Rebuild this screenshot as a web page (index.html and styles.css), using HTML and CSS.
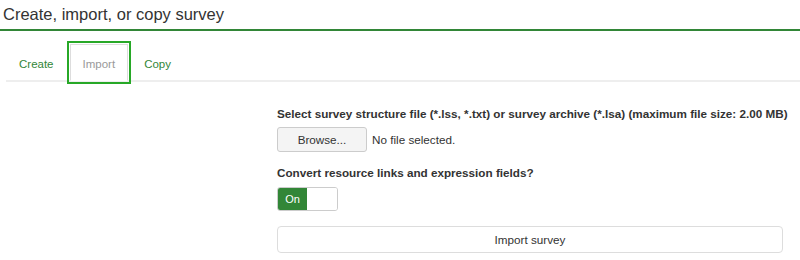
FILE: index.html
```html
<!DOCTYPE html>
<html>
<head>
<meta charset="utf-8">
<link rel="stylesheet" href="styles.css">
</head>
<body>
<div class="header">
  <h1 class="title">Create, import, or copy survey</h1>
</div>
<ul class="tabs">
  <li class="tab"><a class="tab-link">Create</a></li>
  <li class="tab active"><a class="tab-link">Import</a></li>
  <li class="tab"><a class="tab-link">Copy</a></li>
</ul>
<div class="form-grid">
  <div class="spacer"></div>
  <div class="form-col">
    <div class="label">Select survey structure file (*.lss, *.txt) or survey archive (*.lsa) (maximum file size: 2.00 MB)</div>
    <div class="file-row">
      <span class="browse">Browse...</span>
      <span class="file-name">No file selected.</span>
    </div>
    <div class="label label-2">Convert resource links and expression fields?</div>
    <div class="toggle">
      <span class="toggle-on">On</span>
      <span class="toggle-off"></span>
    </div>
    <div class="submit">Import survey</div>
  </div>
</div>
</body>
</html>
```
FILE: styles.css
```css
* { box-sizing: border-box; }
body {
  margin: 0;
  background: #fff;
  font-family: "Liberation Sans", Arial, sans-serif;
  color: #333;
  width: 800px;
  height: 260px;
  overflow: hidden;
}
.header {
  padding: 4px 0 5px 3px;
  border-bottom: 2px solid #328637;
}
.title {
  margin: 0;
  font-size: 16.5px;
  line-height: 20px;
  font-weight: normal;
  color: #333;
}
.tabs {
  list-style: none;
  margin: 13px 0 0 6px;
  padding: 0;
  display: flex;
  border-bottom: 2px solid #eee;
}
.tab {
  margin-right: 3px;
  margin-bottom: -1px;
}
.tab-link {
  display: block;
  padding: 3px 12px 0;
  line-height: 32px;
  font-size: 11.5px;
  color: #328637;
  border: 1px solid transparent;
}
.tab.active .tab-link {
  color: #999;
  background: #fff;
  border-color: #ddd #ddd transparent;
  outline: 2.5px solid #27a827;
  outline-offset: 1px;
}
.form-grid {
  display: grid;
  grid-template-columns: 277px 506px;
  margin-top: 24px;
}
.label {
  font-size: 11.7px;
  line-height: 15px;
  font-weight: bold;
  color: #333;
  white-space: nowrap;
}
.file-row {
  display: flex;
  align-items: center;
  margin-top: 6px;
  font-size: 11.7px;
}
.browse {
  width: 90px;
  height: 25px;
  line-height: 23px;
  text-align: center;
  background: #f4f4f4;
  border: 1px solid #ccc;
  border-radius: 3px;
  color: #333;
}
.file-name {
  margin-left: 5px;
}
.label-2 {
  margin-top: 13px;
}
.toggle {
  display: flex;
  width: 61px;
  height: 24px;
  margin-top: 7px;
  border: 1px solid #ccc;
  border-radius: 3px;
  overflow: hidden;
}
.toggle-on {
  width: 29px;
  background: #328637;
  color: #fff;
  font-size: 11px;
  line-height: 22px;
  text-align: center;
}
.toggle-off {
  flex: 1;
  background: #fff;
}
.submit {
  margin-top: 15px;
  height: 27px;
  line-height: 25px;
  border: 1px solid #ddd;
  border-radius: 4px;
  text-align: center;
  font-size: 11.7px;
  color: #333;
  background: #fff;
}
```
